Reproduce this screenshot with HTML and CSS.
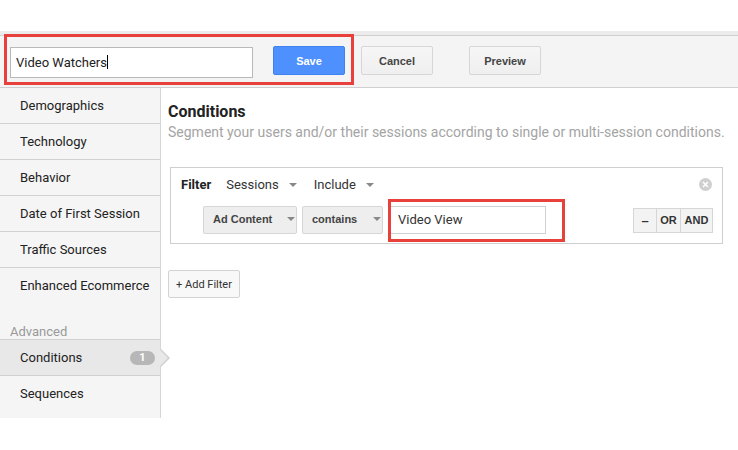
FILE: index.html
```html
<!DOCTYPE html>
<html>
<head>
<meta charset="utf-8">
<link rel="stylesheet" href="styles.css">
</head>
<body>
<div class="top-space"></div>
<div class="toolbar">
  <div class="name-input">Video Watchers<span class="caret"></span></div>
  <button class="btn btn-save">Save</button>
  <button class="btn btn-cancel">Cancel</button>
  <button class="btn btn-preview">Preview</button>
  <div class="highlight hl-top"></div>
</div>
<div class="body-row">
  <div class="sidebar">
    <div class="nav-item">Demographics</div>
    <div class="nav-item">Technology</div>
    <div class="nav-item">Behavior</div>
    <div class="nav-item">Date of First Session</div>
    <div class="nav-item">Traffic Sources</div>
    <div class="nav-item no-border">Enhanced Ecommerce</div>
    <div class="nav-label">Advanced</div>
    <div class="nav-item active">Conditions<span class="badge">1</span><span class="pointer"></span></div>
    <div class="nav-item no-border">Sequences</div>
  </div>
  <div class="main">
    <h1 class="title">Conditions</h1>
    <p class="subtitle">Segment your users and/or their sessions according to single or multi-session conditions.</p>
    <div class="filter-box">
      <div class="filter-head">
        <span class="filter-label">Filter</span>
        <span class="dd">Sessions<span class="tri"></span></span>
        <span class="dd">Include<span class="tri"></span></span>
        <span class="close-icon">
          <svg width="13" height="13" viewBox="0 0 13 13"><circle cx="6.5" cy="6.5" r="6.5" fill="#cfcfcf"/><path d="M4 4 L9 9 M9 4 L4 9" stroke="#fff" stroke-width="1.5"/></svg>
        </span>
      </div>
      <div class="filter-row">
        <button class="sel sel-dim">Ad Content<span class="tri"></span></button>
        <button class="sel sel-op">contains<span class="tri"></span></button>
        <div class="value-input">Video View</div>
        <div class="highlight hl-value"></div>
        <div class="logic">
          <button class="lg lg-minus">&#8211;</button>
          <button class="lg lg-or">OR</button>
          <button class="lg lg-and">AND</button>
        </div>
      </div>
    </div>
    <button class="add-filter">+ Add Filter</button>
  </div>
</div>
</body>
</html>
```

FILE: styles.css
```css
* { box-sizing: border-box; }
html, body { margin: 0; padding: 0; background: #fff; }
body { font-family: Roboto, "Liberation Sans", Arial, sans-serif; color: #222; width: 738px; height: 450px; overflow: hidden; }

.top-space { height: 31px; background: #fff; }

.toolbar {
  position: relative;
  height: 57px;
  background: #f4f4f4;
  border-top: 4px solid #ececec;
  border-bottom: 1px solid #cfcfcf;
  box-shadow: inset 0 1px 0 #cfcfcf;
  display: flex;
  align-items: flex-start;
  padding: 11px 0 0 10px;
}
.name-input {
  width: 243px;
  height: 31px;
  background: #fff;
  border: 1px solid #b9b9b9;
  font-size: 13px;
  line-height: 29px;
  padding-left: 5px;
  color: #222;
  margin-top: 1px;
}
.caret { display: inline-block; width: 1px; height: 14px; background: #000; vertical-align: -2px; }

.btn {
  font-family: "Liberation Sans", Arial, sans-serif;
  font-weight: bold;
  font-size: 11px;
  height: 29px;
  width: 72px;
  border-radius: 2px;
  padding: 0;
  cursor: default;
}
.btn-save {
  margin-left: 20px;
  background: #4d90fe;
  border: 1px solid #3d82f0;
  color: #fff;
}
.btn-cancel, .btn-preview {
  background: linear-gradient(#f6f6f6, #efefef);
  border: 1px solid #d6d6d6;
  color: #444;
}
.btn-cancel { margin-left: 16px; }
.btn-preview { margin-left: 36px; }

.highlight { position: absolute; border: 3px solid #e8413c; pointer-events: none; }
.hl-top { left: 4px; top: -1px; width: 350px; height: 51px; }

.body-row { display: flex; align-items: flex-start; }

.sidebar {
  width: 161px;
  height: 330px;
  background: #f5f5f5;
  border-right: 1px solid #d6d6d6;
  flex-shrink: 0;
}
.nav-item {
  position: relative;
  height: 36px;
  line-height: 36px;
  padding-left: 20px;
  font-size: 13px;
  color: #222;
  border-bottom: 1px solid #d0d0d0;
}
.nav-item.no-border { border-bottom: none; }
.nav-label {
  height: 36px;
  padding: 20px 0 0 10px;
  font-size: 13px;
  color: #999;
  line-height: 16px;
  border-bottom: 1px solid #d0d0d0;
}
.nav-item.active { background: #e8e8e8; }
.badge {
  position: absolute;
  left: 130px;
  top: 11px;
  width: 25px;
  height: 14px;
  border-radius: 7px;
  background: #b7b7b7;
  color: #fff;
  font-size: 11px;
  font-weight: bold;
  line-height: 14px;
  text-align: center;
}
.pointer {
  position: absolute;
  right: -10px;
  top: 9px;
  width: 0; height: 0;
  border-top: 9px solid transparent;
  border-bottom: 9px solid transparent;
  border-left: 9px solid #d0d0d0;
}
.pointer::after {
  content: "";
  position: absolute;
  left: -10px;
  top: -8px;
  border-top: 8px solid transparent;
  border-bottom: 8px solid transparent;
  border-left: 8px solid #e8e8e8;
}

.main { flex: 1; padding: 14px 0 0 7px; }
.title { margin: 0; font-size: 16px; font-weight: bold; line-height: 20px; color: #222; }
.subtitle { margin: 1px 0 0; font-size: 14px; color: #a4a4a4; line-height: 18px; }

.filter-box {
  margin-top: 26px;
  margin-left: 2px;
  width: 553px;
  height: 77px;
  border: 1px solid #cfcfcf;
  padding: 8px 10px 0 10px;
}
.filter-head { position: relative; display: flex; align-items: center; height: 17px; font-size: 13px; }
.filter-label { font-weight: bold; color: #222; }
.dd { margin-left: 15px; color: #333; display: inline-flex; align-items: center; }
.dd + .dd { margin-left: 17px; }
.tri {
  display: inline-block;
  width: 0; height: 0;
  border-left: 4px solid transparent;
  border-right: 4px solid transparent;
  border-top: 4px solid #888;
  margin-left: 9px;
}
.dd .tri { margin-left: 10px; }
.close-icon { position: absolute; right: 0; top: 2px; height: 13px; }
.close-icon svg { display: block; }

.filter-row { position: relative; display: flex; align-items: center; margin-top: 13px; padding-left: 22px; }
.sel {
  height: 28px;
  border: 1px solid #d6d6d6;
  background: #eeeeee;
  border-radius: 2px;
  font-family: "Liberation Sans", Arial, sans-serif;
  font-size: 11px;
  font-weight: bold;
  color: #444;
  display: flex;
  align-items: center;
  white-space: nowrap;
  padding: 0 0 2px 9px;
  margin: 0;
}
.sel-dim { width: 94px; }
.sel-dim .tri { margin-left: 15px; }
.sel-op { width: 81px; margin-left: 5px; }
.sel-op .tri { margin-left: 16px; }
.value-input {
  width: 157px;
  height: 28px;
  margin-left: 6px;
  border: 1px solid #d0d0d0;
  background: #fff;
  font-size: 13px;
  line-height: 26px;
  padding-left: 8px;
  color: #333;
}
.hl-value { left: 207px; top: -7px; width: 177px; height: 43px; }
.logic { display: flex; margin-left: auto; margin-right: -1px; }
.lg {
  height: 25px;
  border: 1px solid #d6d6d6;
  background: #f3f3f3;
  font-family: "Liberation Sans", Arial, sans-serif;
  font-size: 11px;
  font-weight: bold;
  color: #333;
  padding: 0;
  margin: 0;
}
.lg + .lg { border-left: none; }
.lg-minus { width: 24px; font-size: 13px; }
.lg-or { width: 24px; }
.lg-and { width: 32px; }

.add-filter {
  display: block;
  margin-top: 26px;
  width: 72px;
  height: 28px;
  border: 1px solid #d3d3d3;
  border-radius: 2px;
  background: #f8f8f8;
  font-family: Roboto, "Liberation Sans", Arial, sans-serif;
  font-size: 11px;
  color: #333;
  padding: 0;
}
```
